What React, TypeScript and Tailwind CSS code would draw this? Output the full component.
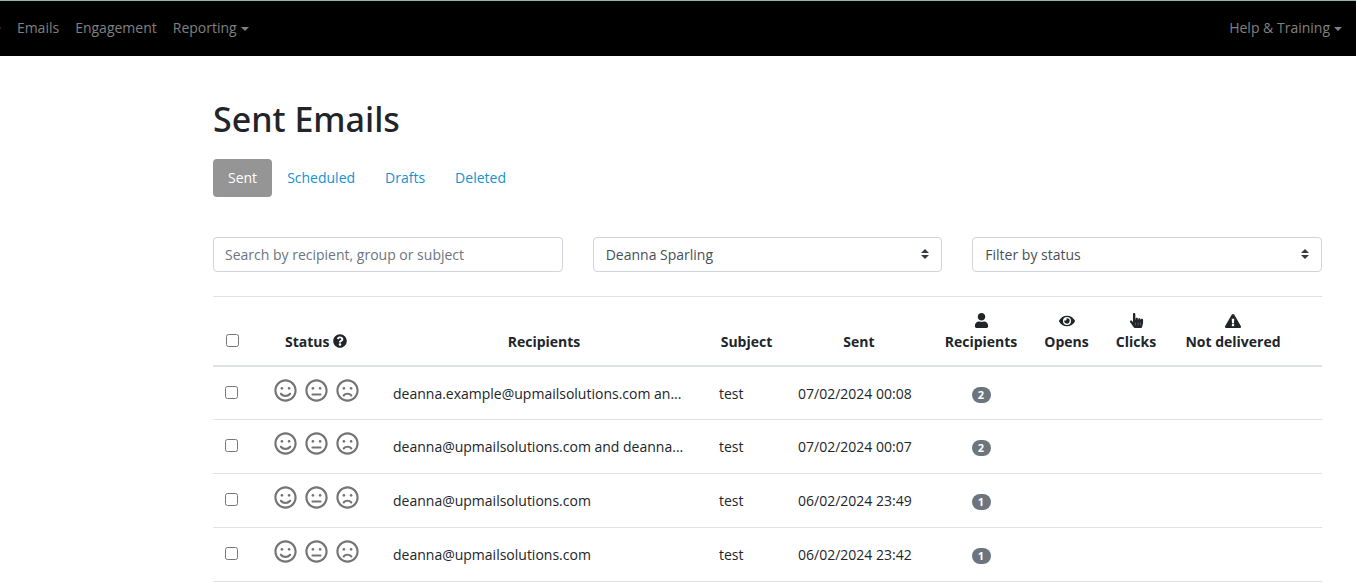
import { useState } from "react";
import {
  FaExclamationTriangle,
  FaEye,
  FaHandPointer,
  FaQuestionCircle,
  FaRegFrown,
  FaRegMeh,
  FaRegSmile,
  FaUser,
} from "react-icons/fa";

type Email = {
  id: number;
  recipients: string;
  subject: string;
  sent: string;
  count: number;
};

const emails: Email[] = [
  { id: 1, recipients: "deanna.example@upmailsolutions.com an...", subject: "test", sent: "07/02/2024 00:08", count: 2 },
  { id: 2, recipients: "deanna@upmailsolutions.com and deanna...", subject: "test", sent: "07/02/2024 00:07", count: 2 },
  { id: 3, recipients: "deanna@upmailsolutions.com", subject: "test", sent: "06/02/2024 23:49", count: 1 },
  { id: 4, recipients: "deanna@upmailsolutions.com", subject: "test", sent: "06/02/2024 23:42", count: 1 },
];

const tabs = ["Sent", "Scheduled", "Drafts", "Deleted"];

function Caret() {
  return <span className="ml-1 inline-block border-x-4 border-t-4 border-x-transparent border-t-current align-middle" />;
}

function NavLink({ label, caret }: { label: string; caret?: boolean }) {
  return (
    <a href="#" className="px-2 whitespace-nowrap hover:text-white">
      {label}
      {caret && <Caret />}
    </a>
  );
}

function Select({ label }: { label: string }) {
  return (
    <div className="relative">
      <select
        aria-label={label}
        className="block h-[35px] w-full appearance-none rounded border border-[#ced4da] bg-white px-3 text-[#495057]"
      >
        <option>{label}</option>
      </select>
      <svg viewBox="0 0 4 5" className="pointer-events-none absolute top-3 right-[13px] h-[10px] w-2" fill="#343a40">
        <path d="M2 0L0 2h4zm0 5L0 3h4z" />
      </svg>
    </div>
  );
}

function Checkbox({ label }: { label: string }) {
  return <input type="checkbox" aria-label={label} className="block size-[13px]" />;
}

export default function App() {
  const [active, setActive] = useState("Sent");

  return (
    <div className="min-h-screen bg-white font-['Open_Sans','Noto_Sans',sans-serif] text-sm text-[#212529]">
      {/* Navbar */}
      <nav className="flex h-14 items-center justify-between overflow-hidden border-t border-[#8fb3b5] bg-black pr-[6px] pb-[2px] text-[#808080]">
        <div className="-ml-[15px] flex">
          <NavLink label="e" />
          <NavLink label="Emails" />
          <NavLink label="Engagement" />
          <NavLink label="Reporting" caret />
        </div>
        <NavLink label="Help & Training" caret />
      </nav>

      <main className="pt-[39px] pr-[34px] pl-[213px]">
        <h1 className="font-['Noto_Sans',sans-serif] text-[34px] leading-[48px] font-medium">Sent Emails</h1>

        <div className="mt-4 flex">
          {tabs.map((tab) => (
            <button
              key={tab}
              onClick={() => setActive(tab)}
              className={`h-[38px] rounded px-[15px] ${active === tab ? "bg-[#959595] text-white" : "text-[#1492d2]"}`}
            >
              {tab}
            </button>
          ))}
        </div>

        {/* Filters */}
        <div className="mt-10 grid grid-cols-3 gap-[30px]">
          <input
            type="text"
            aria-label="Search by recipient, group or subject"
            placeholder="Search by recipient, group or subject"
            className="h-[35px] min-w-0 rounded border border-[#ced4da] px-[11px] placeholder:text-[#6c757d]"
          />
          <Select label="Deanna Sparling" />
          <Select label="Filter by status" />
        </div>

        <table className="mt-6 w-full table-fixed border-separate border-spacing-0">
          <colgroup>
            <col className="w-[38px]" />
            <col className="w-[130px]" />
            <col className="w-[326px]" />
            <col className="w-[79px]" />
            <col className="w-[146px]" />
            <col className="w-[98px]" />
            <col className="w-[73px]" />
            <col className="w-[66px]" />
            <col className="w-[128px]" />
            <col />
          </colgroup>
          <thead>
            <tr className="h-[71px] [&>th]:border-t [&>th]:border-b-2 [&>th]:border-[#dee2e6] [&>th]:pb-3 [&>th]:align-bottom [&>th]:leading-[22px] [&>th]:font-bold">
              <th className="pl-[13px]">
                <div className="pb-[6px]">
                  <Checkbox label="Select all" />
                </div>
              </th>
              <th>
                Status <FaQuestionCircle className="inline size-[14px] align-[-1px]" />
              </th>
              <th>Recipients</th>
              <th>Subject</th>
              <th>Sent</th>
              <th>
                <FaUser className="mx-auto mb-[3px] size-[15px]" />
                Recipients
              </th>
              <th>
                <FaEye className="mx-auto mb-[2px] size-4" />
                Opens
              </th>
              <th>
                <FaHandPointer className="mx-auto mb-[3px] size-[15px]" />
                Clicks
              </th>
              <th>
                <FaExclamationTriangle className="mx-auto mb-[2px] size-4" />
                Not delivered
              </th>
              <th />
            </tr>
          </thead>
          <tbody>
            {emails.map((email) => (
              <tr
                key={email.id}
                className="h-[54px] first:h-[53px] [&>td]:border-b [&>td]:border-[#dee2e6] [&>td]:px-3 [&>td]:pt-4 [&>td]:align-top [&>td]:leading-[22px]"
              >
                <td>
                  <div className="pt-[3px]">
                    <Checkbox label={`Select email sent ${email.sent}`} />
                  </div>
                </td>
                <td>
                  <div className="-mt-1 ml-[11px] flex gap-2 text-[#747474]">
                    <FaRegSmile className="size-[23px]" />
                    <FaRegMeh className="size-[23px]" />
                    <FaRegFrown className="size-[23px]" />
                  </div>
                </td>
                <td className="truncate">{email.recipients}</td>
                <td>{email.subject}</td>
                <td className="whitespace-nowrap">{email.sent}</td>
                <td>
                  <span className="mx-auto mt-1 block h-4 w-[19px] rounded-full bg-[#6c757d] text-center text-[11px] leading-4 font-bold text-white">
                    {email.count}
                  </span>
                </td>
                <td />
                <td />
                <td />
                <td />
              </tr>
            ))}
          </tbody>
        </table>
      </main>
    </div>
  );
}
